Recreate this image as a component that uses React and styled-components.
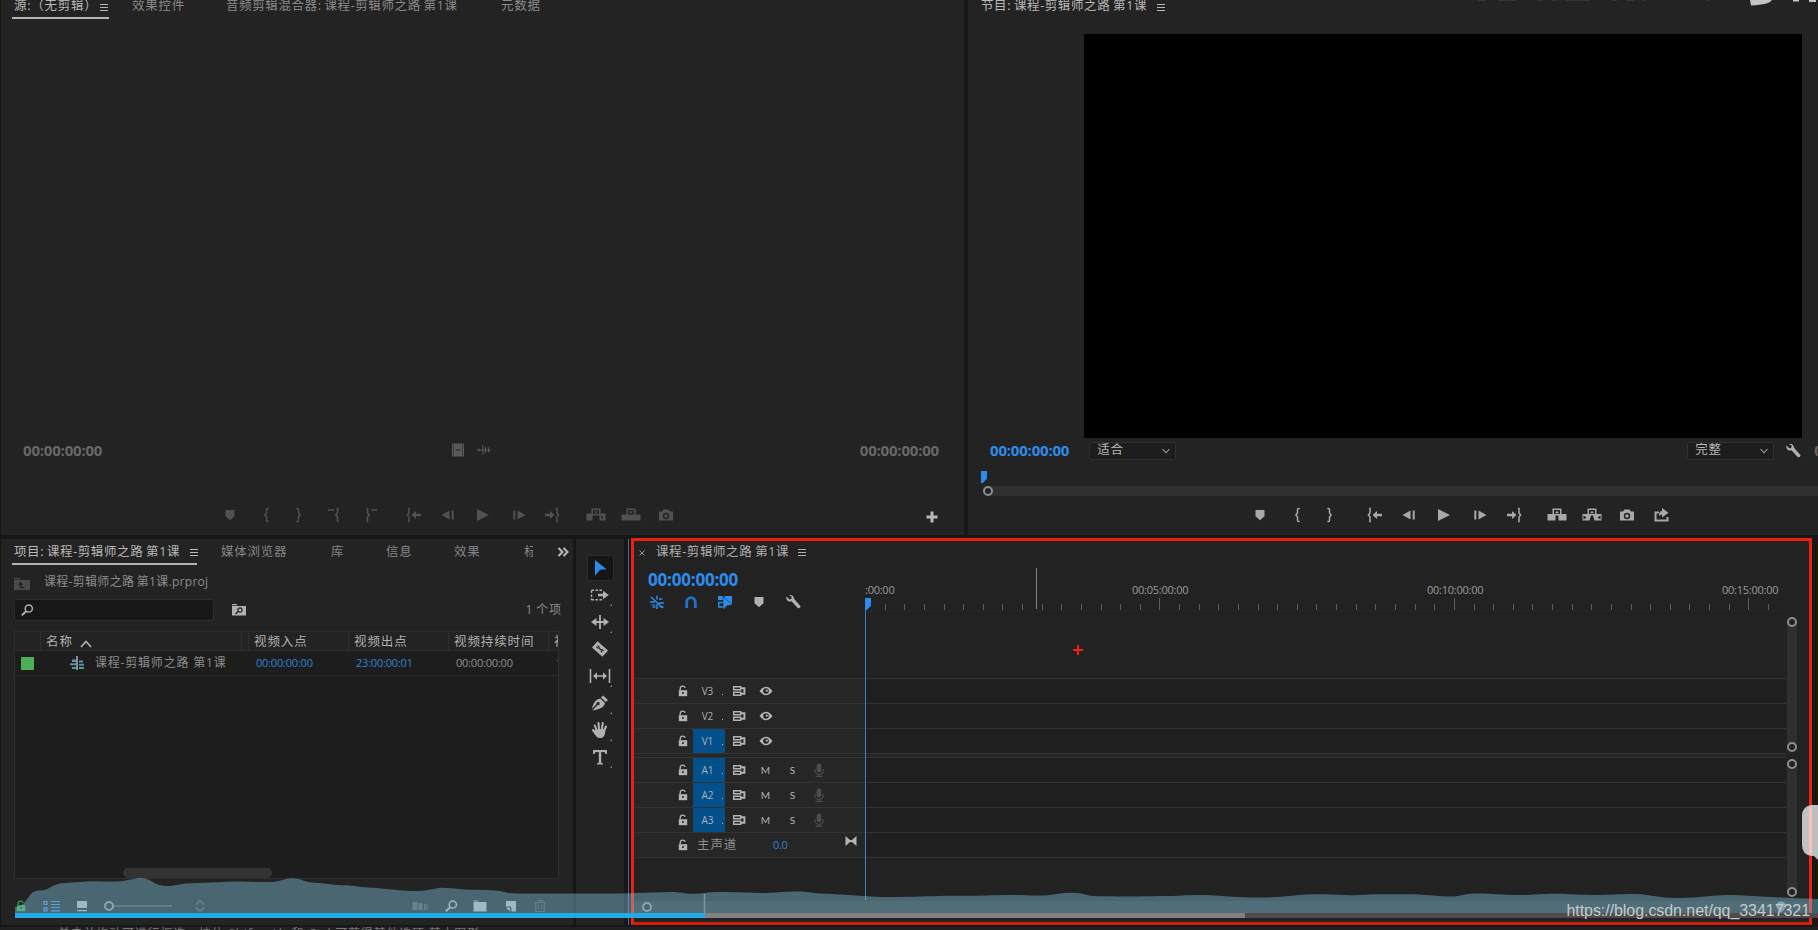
import React from 'react'
import styled, { createGlobalStyle } from 'styled-components'

const GlobalStyle = createGlobalStyle`
* {
  box-sizing: border-box;
}
body {
  margin: 0;
  background: #171717;
  overflow: hidden;
  font-family: 'Open Sans', 'Noto Sans CJK SC', sans-serif;
}
svg {
  display: block;
  flex: none;
  overflow: visible;
}
`

/* ---------- icons, every one is drawn around its own centre ---------- */

const shapes = {
  marker: <path d="M-4.5 -5h9v6.2l-4.5 4l-4.5-4z" />,
  inPoint: <path d="M2.7 -6.5h-1.2q-1 0-1 1v3.5l-1.6 2l1.6 2v3.5q0 1 1 1h1.2" fill="none" stroke="currentColor" strokeWidth="1.5" />,
  outPoint: <path d="M-2.7 -6.5h1.2q1 0 1 1v3.5l1.6 2l-1.6 2v3.5q0 1-1 1h-1.2" fill="none" stroke="currentColor" strokeWidth="1.5" />,
  clearIn: <path d="M-5 -5h6M5.5 -6.5h-1v4.5l-1.6 2l1.6 2v4.5h1" fill="none" stroke="currentColor" strokeWidth="1.6" />,
  clearOut: <path d="M5 -5h-6M-5.5 -6.5h1v4.5l1.6 2l-1.6 2v4.5h-1" fill="none" stroke="currentColor" strokeWidth="1.6" />,
  goIn: (
    <g>
      <path d="M-4 -6.5h-1v4.5l-1.6 2l1.6 2v4.5h1" fill="none" stroke="currentColor" strokeWidth="1.5" />
      <path d="M-2.5 0l4.500-4v2.700h5v2.600h-5v2.700z" />
    </g>
  ),
  goOut: (
    <g>
      <path d="M4 -6.5h1v4.5l1.6 2l-1.6 2v4.5h-1" fill="none" stroke="currentColor" strokeWidth="1.5" />
      <path d="M2.5 0l-4.500-4v2.700h-5v2.600h5v2.700z" />
    </g>
  ),
  stepBack: <path d="M-6.5 0l8-4.5v9zM3.7 -4.5h2v9h-2z" />,
  stepForward: <path d="M6.5 0l-8-4.5v9zM-5.7 -4.5h2v9h-2z" />,
  play: <path d="M-6 -6l12 6l-12 6z" />,
  insert: (
    <g>
      <path d="M-9.5 -1.5h5v-5h9v5h5v7h-6v-5h-7v5h-6z" />
      <path d="M-3 -5h6v4h-6z" fill="#232323" />
      <path d="M-2 -3.7h4l-2 2.4z" />
      <path d="M5 .5l2.500 1.700l-2.500 1.700z" fill="#232323" />
    </g>
  ),
  overwrite: (
    <g>
      <path d="M-9.5 -.5h5v-6h9v6h5v6h-19z" />
      <path d="M-3 -5h6v4.5h-6z" fill="#232323" />
      <path d="M-2 -3.7h4l-2 2.4z" />
    </g>
  ),
  lift: (
    <g>
      <path d="M-9.5 -1h5v-5.5h9v5.5h5v6.5h-8v-5h-3v5h-8z" />
      <path d="M-3 -5h6v4h-6z" fill="#232323" />
      <path d="M-2 -1.8h4l-2-2.4z" />
    </g>
  ),
  extract: (
    <g>
      <path d="M-9.5 -1h5v-5.5h9v5.5h5v6.5h-7l-1.5-5h-2l-1.5 5h-7z" />
      <path d="M-3 -5h6v4h-6zM-8.5 .5l3 2l-3 2zM8.5 .5l-3 2l3 2z" fill="#232323" />
      <path d="M-2 -1.8h4l-2-2.4z" />
    </g>
  ),
  camera: (
    <g>
      <path d="M-7 -3.5h3l1.500-2h5l1.500 2h3v9h-14z" />
      <circle cy="1" r="2.5" fill="none" stroke="#232323" strokeWidth="1.5" />
    </g>
  ),
  share: (
    <g>
      <path d="M-3 -2.5h-3.500v8h12v-3.500" fill="none" stroke="currentColor" strokeWidth="2" />
      <path d="M0 -7l6.500 4.700l-6.500 4.700v-2.900q-2 0-3 1.500q0-5 3-5z" />
    </g>
  ),
  plus: <path d="M-1.5 -5.5h3v4h4v3h-4v4h-3v-4h-4v-3h4z" />,
  film: (
    <g>
      <path d="M-6 -6.500h12v13h-12z" />
      <path d="M-4.5 -6.500v13M4.5 -6.500v13" stroke="#232323" strokeDasharray="1 1" />
      <path d="M-2.5 0h5" stroke="#232323" />
    </g>
  ),
  wave: <path d="M-7 0h14M-5 -1.500v3M-1 -4.500v9M1.500 -3v6M4.500 -2.500v5" stroke="currentColor" strokeWidth="1.1" fill="none" />,
  wrench: <path d="M-6.500 -5.500l3 3l1.800-.700l.500-2l-2.800-1.600c2.500-1 5 .600 5 3.600l6.400 7.200c.500 1.500-1.200 3-2.700 2l-6.200-6.700c-3 1-6-1.500-5-4.800z" />,
  chevron: <path d="M-3.5 -2l3.5 3.8l3.5-3.8" fill="none" stroke="currentColor" strokeWidth="1.1" opacity=".85" />,
  chevronUp: <path d="M-5 3l5-5.5l5 5.5" fill="none" stroke="currentColor" strokeWidth="1.7" />,
  menu: <path d="M-4 -3.5h8M-4 -.5h8M-4 2.5h8" stroke="currentColor" strokeWidth="1" fill="none" />,
  more: <path d="M-4.5 -4l4 4l-4 4M.5 -4l4 4l-4 4" fill="none" stroke="currentColor" strokeWidth="2.1" />,
  close: <path d="M-2.5 -2.5l5 5M2.5 -2.5l-5 5" stroke="currentColor" strokeWidth="1" opacity=".8" />,
  bin: (
    <g>
      <path d="M-8 -6h6v1.2h-6zM-8 -4h16v10h-16z" />
      <path d="M2.5 3.5h-4v-4M-3.5 1l2-2.5l2 2.5" fill="none" stroke="#232323" strokeWidth="1.3" />
    </g>
  ),
  binSearch: (
    <g>
      <path d="M-7 -6h5v1.2h-5zM-7 -4h14v9.5h-14z" />
      <path d="M-3.5 4l2.8-2.8" stroke="#232323" strokeWidth="1.4" />
      <circle cx="1" cy="0" r="2.1" fill="none" stroke="#232323" strokeWidth="1.2" />
    </g>
  ),
  search: (
    <g fill="none" stroke="currentColor">
      <circle cx="1.8" cy="-1.5" r="3.6" strokeWidth="1.5" />
      <path d="M-.7 1.2l-4.500 4" strokeWidth="2" />
    </g>
  ),
  sequence: (
    <g>
      <path d="M-5 -3.5h4v2.500h-4zM2 -2.500h4v2h-4z" fill="#5b8fb5" />
      <path d="M-7 .2h6v2h-6zM2 .7h5v2h-5z" fill="#5f86b8" />
      <path d="M-5 4h4v2h-4zM2 4h5v2h-5z" fill="#35a487" />
      <path d="M0 -7v14" stroke="#c8c8c8" strokeWidth="1.3" />
    </g>
  ),
  lock: (
    <g>
      <path d="M-4.2 -.8h8.400v6h-8.400z" />
      <path d="M-2.8 -.8v-1.500c0-3.400 4.600-3.400 4.800-.8" fill="none" stroke="currentColor" strokeWidth="1.3" />
      <circle cy="2" r="1" fill="#232323" />
    </g>
  ),
  sync: (
    <g fill="none" stroke="currentColor" strokeWidth="1.4">
      <path d="M-5.3 -4.200h7v3h-7zM-5.3 1.200h7v3h-7z" />
      <path d="M1.7 -2.700h3.700v5.400h-3.700" strokeWidth="1.9" />
    </g>
  ),
  eye: (
    <g>
      <path d="M-6.5 0q6.500-8.600 13 0q-6.500 8.600-13 0z" />
      <circle r="2.8" fill="#232323" />
      <circle cx=".8" cy="-.3" r="1.100" />
    </g>
  ),
  mic: (
    <g>
      <rect x="-2.4" y="-6.500" width="4.800" height="9" rx="2.400" />
      <path d="M-4.2 -1v1.500c0 5 8.400 5 8.400 0v-1.500M0 4v2.500M-3.500 6.400h7" fill="none" stroke="currentColor" strokeWidth="1.1" />
    </g>
  ),
  bowtie: <path d="M-5.5 -5l4.500 4h2l4.500-4v10l-4.500-4h-2l-4.500 4z" />,
  select: <path d="M-5 -8l11.500 9.200l-6.500 .5l-5 6z" />,
  trackSelect: (
    <g>
      <path d="M-8.500 -4.800h10.500M-8.500 4.800h10.500M-8.500 -4.500v9.500" fill="none" stroke="currentColor" strokeWidth="1.4" strokeDasharray="2.5 1.5" />
      <path d="M-2 -1.300h5v-3l5.800 4.300l-5.800 4.300v-3h-5z" />
    </g>
  ),
  ripple: <path d="M-.9 -7h1.800v5.900h2.600v-3l5.500 4.100l-5.500 4.100v-3h-2.600v5.900h-1.800v-5.900h-2.600v3l-5.500-4.100l5.500-4.100v3h2.600z" />,
  razor: (
    <g transform="rotate(42)">
      <path d="M-7 -4.200h14v8.400h-14z" />
      <path d="M-4 -.9h2l.8.9h2.400l.8-.9h2M-4 1h2M2 1h2" stroke="#232323" strokeWidth="1.2" fill="none" />
    </g>
  ),
  slip: (
    <g>
      <path d="M-9.5 -7v14M9.500 -7v14M-6 0h12" stroke="currentColor" strokeWidth="1.6" />
      <path d="M-7 0l4-3.800v7.600zM7 0l-4-3.800v7.600z" />
    </g>
  ),
  pen: (
    <g>
      <path d="M3 -7.500l5 4.500l-2.200 2l-4.800-4.500z" />
      <path d="M.2 -4.500l4.800 4.500c-1 4-4 6-12.500 7.500l5-5.500a1.600 1.600 0 1 0-1-1l-4.500 5c1.200-6 3.500-9.500 8.200-10.500z" />
    </g>
  ),
  hand: (
    <g>
      <path d="M-3.500 0l-1.700-4.500M-1 -.5l-.5-6.500M1.800 -.5l1-6.500M4 1l2-4.500M-4 4l-3-4" stroke="currentColor" strokeWidth="2.1" strokeLinecap="round" />
      <path d="M-4.800 -.5l9.800-.5c.8 4-.5 8.500-4 9h-2c-2.500-.5-4-3-5-5.500z" />
    </g>
  ),
  type: <path d="M-7 -7h14v4h-1.500q0-2-1.800-2h-2.500v10.500q0 .8 1.800 .8v1.200h-6v-1.200q1.800 0 1.800-.8v-10.500h-2.500q-1.800 0-1.800 2h-1.500z" />,
  nest: (
    <g stroke="currentColor" fill="none">
      <path d="M-6 -5l12 11M-7 0h5M2 1h5M-4.500 5h3M2 -3h3.500" strokeWidth="1.5" />
      <path d="M0 -6.500v4M0 2v5" strokeWidth="1.5" />
      <path d="M-5.500 3h4M2.500 4.800h4" strokeWidth="1.2" />
    </g>
  ),
  magnet: <path d="M-4.300 6v-6a4.300 4.300 0 0 1 8.600 0v6" fill="none" stroke="currentColor" strokeWidth="2.8" />,
  linked: (
    <g>
      <path d="M-7 -6h5v4h-5zM-.5 -6h7.500v8h-7.500z" />
      <path d="M-2 5h-4.300v-4.500h4.300" fill="none" stroke="currentColor" strokeWidth="1.4" />
      <path d="M-2 -5.500l9.500 8.500l-5 .5l-4.500 4z" stroke="#232323" strokeWidth=".5" />
    </g>
  ),
  list: (
    <g stroke="currentColor" fill="none">
      <path d="M-8 -4.500h3v3h-3zM-8 1.800h3v3h-3z" strokeWidth="1.2" />
      <path d="M-1 -4.500h9M-1 -1.500h9M-1 1.500h9M-1 4.800h9" strokeWidth="1.2" />
    </g>
  ),
  iconView: <path d="M-5 -5h10v7h-10zM-5 4h10v1.300h-10z" />,
  sort: <path d="M-4 -1.500l4-4l4 4M-4 1.500l4 4l4-4" fill="none" stroke="currentColor" strokeWidth="1.5" />,
  automate: <path d="M-7.500 -4h5v8h-5zM-1.500 -3h4v7h-4zM4 -2h1.500v6h-1.500zM6.500 -2h1v6h-1z" />,
  folder: <path d="M-6.500 -5.500h5v1h-5zM-6.500 -4h13v9.500h-13z" />,
  newItem: <path d="M-5 -5h10v10.500h-4.500l-.5-5h-5zM-5 1.500h4v4z" />,
  trash: <path d="M-5.500 -3.500h11M-2 -5.500h4v2M-4.300 -3.500v9h8.600v-9M-1.600 -1v4.500M1.600 -1v4.500" fill="none" stroke="currentColor" strokeWidth="1.2" />,
  pin: (
    <g>
      <path d="M-5 -1a5 4.500 0 0 1 10 0q-1 3-5 7q-4-4-5-7z" />
      <circle cy="-1" r="1.5" fill="#4b6872" />
    </g>
  ),
}

function Icon({ name, size = 20 }) {
  return (
    <svg width={size} height={size} viewBox={`${-size / 2} ${-size / 2} ${size} ${size}`} fill="currentColor">
      {shapes[name]}
    </svg>
  )
}

/* ---------- data ---------- */

const SEQ = '课程-剪辑师之路 第1课'

const sourceButtons = [
  ['marker', 0], ['inPoint', 16], ['outPoint', 13], ['clearIn', 14], ['clearOut', 19], ['goIn', 22], ['stepBack', 14],
  ['play', 15], ['stepForward', 16], ['goOut', 13], ['insert', 24], ['overwrite', 15], ['camera', 15],
]
const programButtons = [
  ['marker', 0], ['inPoint', 17], ['outPoint', 13], ['goIn', 25], ['stepBack', 14], ['play', 15], ['stepForward', 16],
  ['goOut', 14], ['lift', 23], ['extract', 15], ['camera', 15], ['share', 15],
]
const tools = ['trackSelect', 'ripple', 'razor', 'slip', 'pen', 'hand', 'type']
const videoTracks = [['V3', false], ['V2', false], ['V1', true]]
const audioTracks = ['A1', 'A2', 'A3']
const ticks = Array.from({ length: 47 }, (_, i) => i)
const rulerLabels = ['00:05:00:00', '00:10:00:00', '00:15:00:00']

/* ---------- panels ---------- */

function Source() {
  return (
    <SourcePanel>
      <TopTabs>
        <TopTab $w={118} $on $gap={1}><span>源:（无剪辑）</span><Icon name="menu" size={10} /></TopTab>
        <TopTab $w={94}><span>效果控件</span></TopTab>
        <TopTab $w={275}><Tight>音频剪辑混合器: {SEQ}</Tight></TopTab>
        <TopTab $w={80}><span>元数据</span></TopTab>
      </TopTabs>
      <Underline $w={97} />
      <SourceInfo>
        <Timecode $dim>00:00:00:00</Timecode>
        <SourceModes><Icon name="film" /><Icon name="wave" /></SourceModes>
        <Timecode $dim>00:00:00:00</Timecode>
      </SourceInfo>
      <Transport $left={219} $dim>
        {sourceButtons.map(([name, gap]) => <Button key={name} $gap={gap}><Icon name={name} /></Button>)}
        <AddButton><Icon name="plus" /></AddButton>
      </Transport>
    </SourcePanel>
  )
}

function Program() {
  return (
    <ProgramPanel>
      <TopTabs>
        <TopTab $w={300} $on $gap={9}><Tight>节目: {SEQ}</Tight><Icon name="menu" size={10} /></TopTab>
      </TopTabs>
      <Screen />
      <ProgramInfo>
        <Timecode>00:00:00:00</Timecode>
        <Select>适合<Icon name="chevron" size={10} /></Select>
        <Select $right>完整<Icon name="chevron" size={10} /></Select>
        <WrenchSlot><Icon name="wrench" /></WrenchSlot>
        <Timecode $dim>0</Timecode>
      </ProgramInfo>
      <Scrubber>
        <Head />
        <Bar><Ring /></Bar>
      </Scrubber>
      <Transport $left={282} $program>
        {programButtons.map(([name, gap]) => <Button key={name} $gap={gap}><Icon name={name} /></Button>)}
      </Transport>
    </ProgramPanel>
  )
}

function Project() {
  return (
    <ProjectPanel>
      <ProjectTabs>
        <ProjectTab $w={207} $on><Tight>项目: {SEQ}</Tight><Icon name="menu" size={10} /></ProjectTab>
        <ProjectTab $w={110}>媒体浏览器</ProjectTab>
        <ProjectTab $w={55}>库</ProjectTab>
        <ProjectTab $w={68}>信息</ProjectTab>
        <ProjectTab $w={70}>效果</ProjectTab>
        <ProjectTab $w={9} $cut>标</ProjectTab>
        <MoreTabs><Icon name="more" size={14} /></MoreTabs>
      </ProjectTabs>
      <Underline $w={185} />
      <Crumb><Icon name="bin" size={18} /><span>{SEQ}.prproj</span></Crumb>
      <SearchRow>
        <SearchBox><Icon name="search" size={14} /></SearchBox>
        <Icon name="binSearch" size={16} />
        <Count>1 个项</Count>
      </SearchRow>
      <Table>
        <TableHead>
          <Cell $w={26} />
          <Cell $w={201}>名称<Icon name="chevronUp" size={14} /></Cell>
          <Cell $w={7} />
          <Cell $w={100}>视频入点</Cell>
          <Cell $w={100}>视频出点</Cell>
          <Cell $w={100}>视频持续时间</Cell>
          <Cell $w={10}>视</Cell>
        </TableHead>
        <TableRow>
          <Label />
          <NameCell><Icon name="sequence" size={16} /><span>{SEQ}</span></NameCell>
          <Time $blue>00:00:00:00</Time>
          <Time $blue>23:00:00:01</Time>
          <Time>00:00:00:00</Time>
          <Time>1</Time>
        </TableRow>
        <HScroll />
      </Table>
      <ProjectFooter>
        <Tint $c="#2fa34a"><Icon name="lock" size={12} /></Tint>
        <Tint $c="#3a8ee0" $gap={16}><Icon name="list" size={18} /></Tint>
        <Tint $gap={15}><Icon name="iconView" size={12} /></Tint>
        <SizeSlider><Ring $plain /><i /></SizeSlider>
        <Tint $c="#555" $gap={22}><Icon name="sort" size={12} /></Tint>
        <Tint $c="#555" $gap={206}><Icon name="automate" size={16} /></Tint>
        <Tint $gap={16}><Icon name="search" size={14} /></Tint>
        <Tint $gap={15}><Icon name="folder" size={14} /></Tint>
        <Tint $gap={18}><Icon name="newItem" size={12} /></Tint>
        <Tint $c="#4c4c4c" $gap={17}><Icon name="trash" size={12} /></Tint>
      </ProjectFooter>
    </ProjectPanel>
  )
}

function Tools() {
  return (
    <ToolPanel>
      <ActiveTool><Icon name="select" /></ActiveTool>
      {tools.map((name) => (
        <Tool key={name} $corner={name !== 'razor'}><Icon name={name} /></Tool>
      ))}
    </ToolPanel>
  )
}

function Timeline() {
  return (
    <TimelinePanel>
      <Frame>
        <TimelineTab>
          <Icon name="close" size={8} />
          <Tight>{SEQ}</Tight>
          <Icon name="menu" size={10} />
        </TimelineTab>
        <TimelineTop>
          <TimelineControls>
            <Timecode $big>00:00:00:00</Timecode>
            <Switches>
              <Tint $c="#2d8ceb"><Icon name="nest" /></Tint>
              <Tint $c="#2273c4"><Icon name="magnet" /></Tint>
              <Tint $c="#2d8ceb"><Icon name="linked" /></Tint>
              <Tint><Icon name="marker" /></Tint>
              <Tint><Icon name="wrench" /></Tint>
            </Switches>
          </TimelineControls>
          <Ruler>
            <Labels>
              <span>:00:00</span>
              {rulerLabels.map((text) => <RulerLabel key={text}>{text}</RulerLabel>)}
            </Labels>
            <svg width="922" height="12">
              {ticks.map((i) => (
                <path key={i} d={`M${Math.round(i * 19.63) + 0.5} ${i % 15 === 0 ? 0 : 6}V12`} stroke="#5c5c5c" />
              ))}
            </svg>
            <PlayheadLine><Head /></PlayheadLine>
            <HoverLine />
          </Ruler>
        </TimelineTop>
        <TimelineBody>
          <Tracks>
            <EmptyTrack />
            {videoTracks.map(([name, on]) => (
              <Track key={name}>
                <TrackHeader>
                  <Icon name="lock" size={12} />
                  <TrackName $on={on}>{name}<i /></TrackName>
                  <Icon name="sync" size={12} />
                  <Icon name="eye" size={14} />
                </TrackHeader>
                <Lane />
              </Track>
            ))}
            <TrackGap />
            {audioTracks.map((name) => (
              <Track key={name}>
                <TrackHeader>
                  <Icon name="lock" size={12} />
                  <TrackName $on>{name}<i /></TrackName>
                  <Icon name="sync" size={12} />
                  <Letter>M</Letter>
                  <Letter>S</Letter>
                  <Mic><Icon name="mic" size={14} /></Mic>
                </TrackHeader>
                <Lane />
              </Track>
            ))}
            <Track>
              <TrackHeader>
                <Icon name="lock" size={12} />
                <Master>主声道</Master>
                <Level>0.0</Level>
                <Bowtie><Icon name="bowtie" size={12} /></Bowtie>
              </TrackHeader>
              <Lane />
            </Track>
          </Tracks>
          <Scrolls>
            <VScroll $h={135}><Ring /><Ring /></VScroll>
            <VScroll $h={138}><Ring /><Ring /></VScroll>
          </Scrolls>
          <Crosshair />
        </TimelineBody>
        <TimelineFoot><Ring /><Tint $c="#8e8e8e"><Icon name="pin" size={12} /></Tint></TimelineFoot>
      </Frame>
    </TimelinePanel>
  )
}

/* the video player's heat curve and its progress bar, over the editor */
function Player() {
  return (
    <PlayerLayer>
      <svg width="1818" height="70" viewBox="0 860 1818 70">
        <path
          fill="rgba(130,199,225,.41)"
          d="M15 913V907C20 907 24 904 28 898C32 891 36 890.500 40 890.500C50 890.500 52 884 62 883.300C75 882.500 85 881.300 95 881.300C105 881.500 115 882 123 881C131 880 134 878 141 878C152 878 152 885.500 166 886C175 886 180 883.500 190 883.200C210 883 225 881.500 240 881.500C252 881.800 262 882.300 273 882C282 881 285 878.300 292 878.300C303 878.300 303 882.500 315 882.700C325 883 335 885.300 344 885.300C355 885.300 360 887.700 372 887.700C385 888 395 891 419 891C430 890.500 435 887.700 443 887.700C455 888 460 889.700 474 889.700C485 890 493 890 500 891C507 893 511 893.500 520 893.500H620L670 892C680 892 684 893.700 693 893.700C703 893.700 708 892 720 892C740 892 752 893 767 893C780 892.500 785 891.500 797 891.500C809 891.500 812 893.700 825 893.700C845 894 865 897 890 897C920 897 935 895.800 955 895.800C980 896 990 895 1010 895C1025 894.500 1030 896 1045 895.500C1060 894 1062 892.700 1071 892.700C1085 892.700 1085 896.200 1100 896.200C1130 896.500 1140 896.500 1160 896C1180 896 1190 894.700 1200 895C1220 895 1225 897.500 1263 897.500C1290 897 1295 894.300 1320 894.300C1335 894 1345 896 1360 895C1370 894 1380 894 1400 894.300C1425 894 1435 896.500 1453 896.500C1463 896 1463 893.500 1478 893.500C1493 893.500 1500 895 1520 895C1532 895 1540 893.700 1555 893.700C1570 893.700 1580 895 1597 895C1610 895 1618 894 1633 894C1650 894 1655 898 1680 898C1700 898 1710 895 1727 895C1755 895.500 1780 898 1818 899V913Z"
        />
        <path d="M704.5 894V913" stroke="#82949a" strokeWidth="1.5" />
      </svg>
      <Progress><Played /><Buffered /><Unplayed /></Progress>
    </PlayerLayer>
  )
}

function App() {
  return (
    <Workspace>
      <GlobalStyle />
      <Upper>
        <Source />
        <Program />
      </Upper>
      <Lower>
        <Project />
        <Tools />
        <Timeline />
      </Lower>
      <StatusStrip>单击并拖动可进行框选。按住 Shift、Alt 和 Ctrl 可获得其他选项 基本图形</StatusStrip>
      <Player />
      <CornerLogo width="360" height="8">
        <path d="M290 0h22c-2 3-8 5-21 5.500zM333 0h6v1.500h-6zM349 0h7v2h-7z" fill="#c4c4c4" />
        <path d="M18 .5h8M38 .5h18M78 .5h5M92 .5h5M106 .5h24M152 .5h5M166 .5h8M182 .5h4M246 .5h4" stroke="#343434" />
      </CornerLogo>
      <Bubble width="18" height="56">
        <path d="M18 0h-6q-10 1-10 11v29q0 10 10 11h2l4 4z" fill="rgba(255,255,255,.72)" />
      </Bubble>
      <Watermark>https://blog.csdn.net/qq_33417321</Watermark>
    </Workspace>
  )
}

/* ---------- styles ---------- */

const Workspace = styled.div`
position: relative;
width: 1818px;
height: 930px;
overflow: hidden;
display: flex;
flex-direction: column;
background: #171717;
color: #a6a6a6;
font-size: 12px;
`
const Upper = styled.div`
display: flex;
gap: 4px;
height: 535px;
padding-left: 1px;
flex: none;
`
const Lower = styled.div`
display: flex;
height: 386px;
margin-top: 4px;
padding-left: 1px;
flex: none;
`
const Panel = styled.section`
background: #232323;
display: flex;
flex-direction: column;
flex: none;
overflow: hidden;
`
const SourcePanel = styled(Panel)`
width: 963px;
`
const ProgramPanel = styled(Panel)`
width: 850px;
`
const Tight = styled.span`
letter-spacing: .6px;
word-spacing: -1px;
`
const TopTabs = styled.div`
display: flex;
height: 17px;
padding-left: 13px;
flex: none;
`
const TopTab = styled.div`
width: ${p => p.$w}px;
flex: none;
display: flex;
gap: ${p => p.$gap || 0}px;
white-space: nowrap;
font-size: 12.5px;
letter-spacing: .75px;
line-height: 18px;
margin-top: -3px;
color: ${p => (p.$on ? '#b8b8b8' : '#8a8a8a')};
svg {
  margin-top: 6px;
}
`
const Underline = styled.div`
width: ${p => p.$w}px;
height: 2px;
margin-left: 11px;
background: #b4b4b4;
flex: none;
`
const Timecode = styled.div`
font-size: ${p => (p.$big ? 17 : 15)}px;
font-weight: 700;
letter-spacing: ${p => (p.$big ? -0.2 : -0.2)}px;
line-height: 20px;
color: ${p => (p.$dim ? '#686868' : '#2d8ceb')};
`
const SourceInfo = styled.div`
display: flex;
justify-content: space-between;
height: 20px;
margin: 421px 25px 0 22px;
`
const SourceModes = styled.div`
display: flex;
gap: 6px;
padding: 0 33px 0 12px;
color: #5a5a5a;
`
const Transport = styled.div`
display: flex;
align-items: center;
height: 20px;
margin-top: ${p => (p.$program ? -1 : 45)}px;
padding-left: ${p => p.$left}px;
color: ${p => (p.$dim ? '#515151' : '#a8a8a8')};
`
const Button = styled.div`
width: 20px;
height: 20px;
margin-left: ${p => p.$gap}px;
`
const AddButton = styled.div`
margin: 3px 0 0 246px;
color: #b8b8b8;
`
const Screen = styled.div`
width: 718px;
height: 404px;
margin: 17px 0 0 116px;
background: #000;
flex: none;
`
const ProgramInfo = styled.div`
display: flex;
align-items: center;
height: 23px;
margin-top: 1px;
padding-left: 22px;
flex: none;
& > div {
  flex: none;
}
& > ${Timecode} {
  margin-top: -2px;
}
`
const Select = styled.div`
display: flex;
align-items: center;
justify-content: space-between;
width: 87px;
height: 18px;
margin-left: ${p => (p.$right ? 511 : 20)}px;
padding: 0 4px 2px 7px;
background: #1d1d1d;
border: 1px solid #303030;
border-radius: 2px;
color: #b8b8b8;
font-size: 12.5px;
letter-spacing: .8px;
line-height: 14px;
svg {
  margin-top: 2px;
}
`
const WrenchSlot = styled.div`
margin: 0 11px 0 9px;
color: #b0b0b0;
`
const Scrubber = styled.div`
height: 44px;
padding: 9px 0 0 13px;
flex: none;
`
const Head = styled.div`
width: 6px;
height: 12px;
background: #2d8ceb;
clip-path: polygon(0 0, 100% 0, 100% 65%, 30% 100%, 0 100%);
`
const Bar = styled.div`
height: 10px;
margin: 3px 0 0 2px;
background: #303030;
border-radius: 5px 0 0 5px;
`
const Ring = styled.div`
width: 10px;
height: 10px;
border: 2px solid #8e8e8e;
border-radius: 50%;
background: ${p => (p.$plain ? 'transparent' : '#242424')};
flex: none;
`
const ProjectPanel = styled(Panel)`
width: 572px;
`
const ProjectTabs = styled.div`
display: flex;
height: 24px;
padding: 0 0 2px 13px;
flex: none;
`
const ProjectTab = styled.div`
width: ${p => p.$w}px;
flex: none;
display: flex;
gap: 9px;
align-items: center;
overflow: ${p => (p.$cut ? 'hidden' : 'visible')};
white-space: nowrap;
font-size: 12.5px;
letter-spacing: .75px;
color: ${p => (p.$on ? '#b8b8b8' : '#858585')};
svg {
  margin-top: 5px;
}
`
const MoreTabs = styled.div`
margin: 6px 0 0 23px;
color: #b8b8b8;
`
const Crumb = styled.div`
display: flex;
gap: 13px;
height: 26px;
margin-top: 5px;
padding-left: 12px;
line-height: 24px;
word-spacing: -1px;
color: #8c8c8c;
flex: none;
svg {
  margin-top: 5px;
  color: #4b4b4b;
}
span {
  letter-spacing: .3px;
}
`
const SearchRow = styled.div`
display: flex;
align-items: center;
height: 21px;
margin-top: 3px;
padding: 0 11px 0 13px;
color: #b0b0b0;
flex: none;
`
const SearchBox = styled.div`
width: 200px;
height: 22px;
margin-right: 17px;
padding: 3px 5px;
background: #171717;
border: 1px solid #2d2d2d;
border-radius: 3px;
`
const Count = styled.div`
margin-left: auto;
padding-bottom: 2px;
color: #8a8a8a;
letter-spacing: .9px;
word-spacing: -1px;
`
const Table = styled.div`
width: 545px;
height: 248px;
margin: 11px 0 0 13px;
background: #1d1d1d;
border: 1px solid #2e2e2e;
display: flex;
flex-direction: column;
overflow: hidden;
flex: none;
`
const TableHead = styled.div`
display: flex;
height: 19px;
background: #232323;
border-bottom: 1px solid #2d2d2d;
flex: none;
`
const Cell = styled.div`
width: ${p => p.$w}px;
flex: none;
display: flex;
gap: 6px;
align-items: center;
overflow: hidden;
padding-left: ${p => (p.$w > 7 ? 5 : 0)}px;
padding-bottom: 2px;
border-right: 1px solid #303030;
white-space: nowrap;
font-size: 12.5px;
letter-spacing: .9px;
color: #b0b0b0;
svg {
  margin-top: 7px;
}
`
const TableRow = styled.div`
display: flex;
align-items: center;
height: 25px;
border-bottom: 1px solid #2b2b2b;
font-size: 11px;
flex: none;
& > div {
  flex: none;
}
`
const Label = styled.div`
width: 13px;
height: 13px;
margin-left: 6px;
background: #4caf58;
`
const NameCell = styled.div`
display: flex;
align-items: center;
gap: 10px;
width: 187px;
margin-left: 35px;
font-size: 12px;
letter-spacing: .8px;
color: #8c8c8c;
white-space: nowrap;
span {
  padding-bottom: 3px;
}
`
const Time = styled.div`
width: 100px;
padding-bottom: 2px;
letter-spacing: -.2px;
color: ${p => (p.$blue ? '#2f80d3' : '#8f8f8f')};
`
const HScroll = styled.div`
width: 149px;
height: 10px;
margin: auto 0 0 108px;
background: #333;
border-radius: 5px;
flex: none;
`
const ProjectFooter = styled.div`
display: flex;
align-items: center;
height: 20px;
margin: 17px 0 0 14px;
flex: none;
`
const Tint = styled.div`
flex: none;
margin-left: ${p => p.$gap || 0}px;
color: ${p => p.$c || '#b0b0b0'};
`
const SizeSlider = styled.div`
display: flex;
align-items: center;
flex: none;
width: 68px;
margin-left: 16px;
i {
  flex: 1;
  height: 2px;
  background: #4b4b4b;
}
`
const ToolPanel = styled(Panel)`
width: 48px;
margin-left: 3px;
padding-top: 16px;
align-items: center;
color: #b0b0b0;
`
const ActiveTool = styled.div`
display: flex;
align-items: center;
justify-content: center;
width: 27px;
height: 26px;
background: #161616;
border: 1px solid #2b2b2b;
border-radius: 3px;
color: #2d8ceb;
flex: none;
`
const Tool = styled.div`
position: relative;
display: flex;
align-items: center;
justify-content: center;
width: 26px;
height: 27px;
flex: none;
&::after {
  content: '';
  position: absolute;
  right: 1px;
  bottom: 2px;
  border: 1.5px solid ${p => (p.$corner ? '#8e8e8e' : 'transparent')};
  border-left-color: transparent;
  border-top-color: transparent;
}
`
const TimelinePanel = styled.section`
display: flex;
width: 1190px;
height: 386px;
margin: 0 0 0 4px;
border-left: 1px solid #3c6ea8;
padding-left: 2px;
flex: none;
`
const Frame = styled.div`
display: flex;
flex-direction: column;
width: 1181px;
height: 387px;
margin-top: -1px;
border: 3px solid #ee1f0e;
border-bottom-color: #cf1c0c;
background: #222;
flex: none;
`
const TimelineTab = styled.div`
display: flex;
align-items: center;
height: 21px;
padding: 0 0 2px 4px;
font-size: 12.5px;
color: #b0b0b0;
flex: none;
span {
  margin: 0 8px 0 10px;
}
svg {
  margin-top: 5px;
}
`
const TimelineTop = styled.div`
display: flex;
height: 49px;
flex: none;
`
const TimelineControls = styled.div`
width: 231px;
padding: 8px 0 0 13px;
& > ${Timecode} {
  padding-left: 1px;
}
`
const Switches = styled.div`
display: flex;
gap: 14px;
padding-top: 2px;
`
const Ruler = styled.div`
position: relative;
width: 922px;
padding-top: 20px;
border-bottom: 1px solid #272727;
`
const Labels = styled.div`
display: flex;
height: 16px;
font-size: 11px;
letter-spacing: -.25px;
line-height: 16px;
color: #9a9a9a;
span {
  flex: none;
}
span:first-child {
  width: 30px;
}
`
const RulerLabel = styled.span`
width: 57px;
margin-left: 238px;
&:nth-child(2) {
  margin-left: 237px;
}
`
const PlayheadLine = styled.div`
position: absolute;
left: 0;
top: 36px;
height: 302px;
background: linear-gradient(#2f7fce, #4483c2) 0 0 / 1px 100% no-repeat;
z-index: 2;
`
const HoverLine = styled.div`
position: absolute;
left: 171px;
top: 6px;
width: 1px;
height: 41px;
background: #808080;
`
const TimelineBody = styled.div`
position: relative;
display: flex;
height: 288px;
flex: none;
`
const Tracks = styled.div`
width: 1152px;
`
const EmptyTrack = styled.div`
height: 68px;
border-bottom: 1px solid #333;
`
const TrackGap = styled.div`
height: 4px;
background: #262626;
border-bottom: 1px solid #333;
`
const Track = styled.div`
display: flex;
height: 25px;
border-bottom: 1px solid #333;
`
const TrackHeader = styled.div`
display: flex;
align-items: center;
width: 231px;
padding-left: 43px;
background: #262626;
color: #b4b4b4;
`
const TrackName = styled.div`
display: flex;
align-items: center;
justify-content: center;
position: relative;
width: 32px;
height: 24px;
margin: 0 8px 0 4px;
padding: 0 3px 1px 0;
background: ${p => (p.$on ? '#04508a' : 'transparent')};
font-size: 10px;
color: #a8b0b8;
i {
  position: absolute;
  right: 2px;
  bottom: 8px;
  width: 1px;
  height: 1px;
  background: #a8b0b8;
}
& + svg + svg {
  margin-left: 14px;
}
`
const Letter = styled.div`
width: 14px;
margin-left: 13px;
padding-left: 1px;
text-align: center;
font-size: 10px;
font-family: Lato, sans-serif;
`
const Mic = styled.div`
margin-left: 13px;
color: #4d4d4d;
`
const Master = styled.div`
margin-left: 8px;
width: 76px;
padding-bottom: 4px;
font-size: 12.5px;
letter-spacing: .9px;
color: #8e8e8e;
`
const Level = styled.div`
width: 66px;
padding-bottom: 1px;
font-size: 11px;
letter-spacing: -.3px;
color: #2f80d3;
`
const Bowtie = styled.div`
margin: -8px 0 0 6px;
`
const Lane = styled.div`
flex: 1;
background: #1f1f1f;
`
const Scrolls = styled.div`
display: flex;
flex-direction: column;
gap: 7px;
padding: 6px 0 0 1px;
`
const VScroll = styled.div`
display: flex;
flex-direction: column;
justify-content: space-between;
width: 10px;
height: ${p => p.$h}px;
background: #2f2f2f;
border-radius: 5px;
`
const Crosshair = styled.div`
position: absolute;
left: 439px;
top: 34px;
width: 10px;
height: 10px;
background:
  linear-gradient(#f02314, #f02314) 50% 50% / 2px 100% no-repeat,
  linear-gradient(#f02314, #f02314) 50% 50% / 100% 2px no-repeat;
`
const TimelineFoot = styled.div`
display: flex;
align-items: center;
justify-content: space-between;
height: 12px;
margin-top: 2px;
padding: 0 22px 0 8px;
background: #2f2f2f;
`
const StatusStrip = styled.div`
height: 3px;
margin-top: 2px;
padding-left: 58px;
overflow: hidden;
background: #202020;
font-size: 12px;
letter-spacing: .8px;
line-height: 14px;
color: #777;
white-space: nowrap;
`
const PlayerLayer = styled.div`
position: absolute;
left: 0;
top: 860px;
z-index: 3;
`
const Progress = styled.div`
display: flex;
height: 5px;
margin: -17px 0 0 15px;
position: relative;
`
const Played = styled.div`
width: 690px;
background: #21ace8;
`
const Buffered = styled.div`
width: 540px;
background: #878080;
`
const Unplayed = styled.div`
width: 573px;
background: #504a4a;
`
const CornerLogo = styled.svg`
position: absolute;
left: 1460px;
top: 0;
`
const Bubble = styled.svg`
position: absolute;
left: 1800px;
top: 805px;
z-index: 4;
`
const Watermark = styled.div`
position: absolute;
right: 8px;
top: 901px;
z-index: 5;
font-family: 'Liberation Sans', Arial, sans-serif;
font-size: 16px;
letter-spacing: -.06px;
line-height: 20px;
color: #c6cacb;
`

export default App
